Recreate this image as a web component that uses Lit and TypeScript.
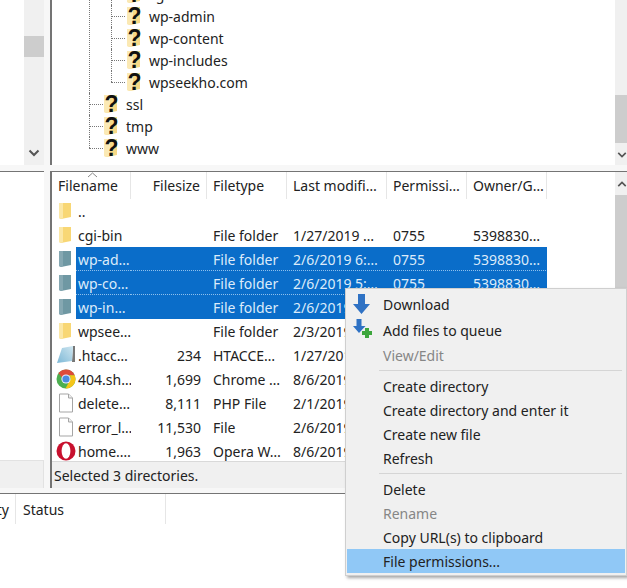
import { LitElement, html, css, svg } from "lit";
import { customElement } from "lit/decorators.js";

type Row = { icon: string; name: string; size?: string; type: string; date?: string; perm?: string; owner?: string; sel?: boolean; dot?: boolean };

const rows: Row[] = [
  { icon: "folder", name: "..", type: "" },
  { icon: "folder", name: "cgi-bin", type: "File folder", date: "1/27/2019 …", perm: "0755", owner: "5398830…" },
  { icon: "selfolder", name: "wp-ad…", type: "File folder", date: "2/6/2019 6:…", perm: "0755", owner: "5398830…", sel: true, dot: true },
  { icon: "selfolder", name: "wp-co…", type: "File folder", date: "2/6/2019 5:…", perm: "0755", owner: "5398830…", sel: true, dot: true },
  { icon: "selfolder", name: "wp-in…", type: "File folder", date: "2/6/2019 5:…", perm: "0755", owner: "5398830…", sel: true },
  { icon: "folder", name: "wpsee…", type: "File folder", date: "2/3/2019 …", perm: "0755", owner: "5398830…" },
  { icon: "ht", name: ".htacc…", size: "234", type: "HTACCE…", date: "1/27/2019 …", perm: "0644", owner: "5398830…" },
  { icon: "chrome", name: "404.sh…", size: "1,699", type: "Chrome …", date: "8/6/2019 …", perm: "0644", owner: "5398830…" },
  { icon: "doc", name: "delete…", size: "8,111", type: "PHP File", date: "2/1/2019 …", perm: "0644", owner: "5398830…" },
  { icon: "doc", name: "error_l…", size: "11,530", type: "File", date: "2/6/2019 …", perm: "0644", owner: "5398830…" },
  { icon: "opera", name: "home.…", size: "1,963", type: "Opera W…", date: "8/6/2019 …", perm: "0644", owner: "5398830…" },
];

const chevron = (up: boolean) => html`<svg class="chev" width="12" height="8" viewBox="0 0 12 8"><polyline points=${up ? "1.5,6.5 6,2 10.5,6.5" : "1.5,1.5 6,6 10.5,1.5"} fill="none" stroke="#555" stroke-width="2"/></svg>`;

const fileIcon = (k: string) => {
  if (k === "folder" || k === "selfolder") {
    const c = k === "folder" ? "#f8d775" : "#6f98a3";
    const d = k === "folder" ? "#fbe7a6" : "#86a8b2";
    return html`<svg width="18" height="18" viewBox="0 0 18 18"><path d="M2 1h12v14l-10 2-2-1z" fill=${c}/><path d="M2 1h4v15l-2 1-2-1z" fill=${d}/></svg>`;
  }
  if (k === "doc")
    return html`<svg width="18" height="20" viewBox="0 0 18 20"><path d="M2.500 1h9l4 4v14h-13z" fill="#fff" stroke="#a5a5a5"/><path d="M11.500 1v4h4" fill="#eee" stroke="#a5a5a5"/></svg>`;
  if (k === "ht")
    return html`<svg width="20" height="20" viewBox="0 0 20 20"><defs><linearGradient id="htg" x1="0" y1="1" x2="1" y2="0"><stop offset="0" stop-color="#7db8d6"/><stop offset="1" stop-color="#cfe6f0"/></linearGradient></defs><path d="M17 1h2v16h-3z" fill="#777"/><path d="M6 3l11-2-1 15-15 2z" fill="url(#htg)"/></svg>`;
  if (k === "chrome")
    return html`<svg width="20" height="20" viewBox="0 0 20 20">
      <circle cx="10" cy="10" r="9.500" fill="#4caf50"/>
      <path d="M10 .5A9.500 9.500 0 0 1 18.700 6.200H10A3.800 3.800 0 0 0 6.400 8.900L2.400 4.300A9.500 9.500 0 0 1 10 .5z" fill="#dd4b39"/>
      <path d="M18.700 6.200A9.500 9.500 0 0 1 9.500 19.500L13.500 12A3.800 3.800 0 0 0 13 6.200z" fill="#f5c518"/>
      <circle cx="10" cy="10" r="4.600" fill="#eef"/><circle cx="10" cy="10" r="3.600" fill="#4a8be0"/></svg>`;
  return html`<svg width="20" height="20" viewBox="0 0 20 20"><ellipse cx="10" cy="10" rx="9.500" ry="9.500" fill="#c8102e"/><ellipse cx="10" cy="10" rx="4.400" ry="7.800" fill="#fff"/></svg>`;
};

const qIcon = svg`<path d="M0 1h13v16l-10 2-3-1z" fill="#f6d987"/><path d="M0 1h6v17l-3 1-3-1z" fill="#fbe9b4"/><text x="0.500" y="18" font-family="Liberation Sans, sans-serif" font-weight="700" font-size="23" fill="#111">?</text>`;

const node = (label: string, kids?: unknown) => html`<div class="node"><div class="label"><svg class="q" width="16" height="20" viewBox="0 0 16 20">${qIcon}</svg><span>${label}</span></div>${kids ? html`<div class="kids">${kids}</div>` : ""}</div>`;

@customElement("app-root")
export class AppRoot extends LitElement {
  static styles = css`
    :host { display: block; width: 627px; height: 588px; overflow: hidden; font-family: "Noto Sans", "Open Sans", sans-serif; font-size: 14px; color: #222; }
    .app { position: relative; width: 627px; height: 588px; background: #f7f7f7; display: flex; flex-direction: column; overflow: hidden; }
    .top { height: 165px; display: flex; flex: none; }
    .leftwhite { width: 24px; background: #fff; flex: none; }
    .sb { width: 20px; background: #f0f0f0; display: flex; flex-direction: column; flex: none; }
    .sb .track { flex: 1; padding-top: 36px; }
    .sb .thumb { height: 21px; background: #cdcdcd; }
    .sb .btn { height: 24px; display: flex; align-items: center; justify-content: center; flex: none; }
    .sash { width: 6px; flex: none; }
    .vline { width: 2px; background: #747474; flex: none; }
    .tree { flex: 1; background: #fff; overflow: hidden; padding: 0 0 0 37px; }
    .tree-in { margin-top: -39px; }
    .node { position: relative; padding-left: 15px; }
    .node::before { content: ""; position: absolute; left: 0; top: 11px; width: 14px; border-top: 1px dotted #777; }
    .node::after { content: ""; position: absolute; left: 0; top: 0; bottom: 0; border-left: 1px dotted #777; }
    .node:last-child::after { bottom: auto; height: 11px; }
    .label { height: 22px; display: flex; align-items: center; gap: 6px; white-space: nowrap; }
    .q { flex: none; }
    .kids { margin-left: 7px; }
    .kids .node { padding-left: 16px; }
    .vsb { width: 12px; background: #f0f0f0; display: flex; flex-direction: column; flex: none; overflow: hidden; }
    .vsb .btn { height: 23px; flex: none; display: flex; align-items: center; padding-left: 2px; }
    .vsb .track { flex: 1; }
    .vsb .thumb { background: #cdcdcd; }
    .t1 { padding-top: 95px; }
    .t1 .thumb { height: 48px; }
    .t2 .thumb { height: 240px; }
    .hgap { height: 6px; flex: none; }
    .mid { height: 317px; display: flex; flex: none; }
    .leftpane { width: 44px; flex: none; display: flex; flex-direction: column; border-top: 1px solid #747474; }
    .leftpane .w { flex: 1; background: #fff; }
    .leftpane .s { height: 27px; background: #f0f0f0; border-top: 1px solid #e2e2e2; border-right: 1px solid #e2e2e2; }
    .rightpane { flex: 1; display: flex; flex-direction: column; border-top: 1px solid #747474; min-width: 0; }
    .listwrap { flex: 1; display: flex; min-height: 0; }
    .list { flex: 1; background: #fff; overflow: hidden; }
    .grid { display: grid; grid-template-columns: 79px 76px 80px 100px 80px 80px; width: 495px; }
    .head { height: 27px; position: relative; }
    .hc { display: flex; align-items: center; padding: 0 6px; border-right: 1px solid #e6e6e6; white-space: nowrap; overflow: hidden; height: 27px; box-sizing: border-box; }
    .hc.r { justify-content: flex-end; }
    .caret { position: absolute; left: 35px; top: 0; }
    .row { height: 24px; }
    .c { display: flex; align-items: center; padding: 0 6px; white-space: nowrap; overflow: hidden; height: 24px; box-sizing: border-box; }
    .c.r { justify-content: flex-end; }
    .c.name { padding: 0; }
    .ic { width: 24px; height: 24px; flex: none; display: flex; align-items: center; justify-content: center; box-sizing: border-box; padding-left: 4px; }
    .nm { flex: 1; height: 24px; display: flex; align-items: center; padding-left: 2px; overflow: hidden; }
    .sel .c:not(.name), .sel .nm { background-color: #0a6dc9; color: #dcebfa; }
    .dot .c:not(.name), .dot .nm { background-image: repeating-linear-gradient(90deg, #8fc0ec 0 1px, transparent 1px 2px); background-size: 100% 1px; background-position: bottom; background-repeat: no-repeat; }
    .status { height: 27px; flex: none; background: #f0f0f0; border-top: 1px solid #d9d9d9; display: flex; align-items: center; padding: 1px 0 0 2px; box-sizing: border-box; }
    .hgap2 { height: 5px; flex: none; }
    .queue { flex: 1; background: #fff; border-top: 1px solid #747474; display: flex; height: 30px; align-items: flex-start; }
    .q1 { width: 16px; height: 30px; display: flex; justify-content: flex-end; align-items: center; overflow: hidden; border-right: 1px solid #e6e6e6; box-sizing: border-box; white-space: nowrap; flex: none; padding-right: 6px; }
    .q2 { width: 150px; height: 30px; display: flex; align-items: center; padding-left: 7px; border-right: 1px solid #e6e6e6; box-sizing: border-box; flex: none; }
    .menu { position: absolute; left: 345px; top: 288px; width: 282px; height: 288px; box-sizing: border-box; background: #f0f0f0; border: 1px solid #cfcfcf; box-shadow: 2px 2px 3px rgba(0,0,0,.35); padding: 2px 1px 2px; display: flex; flex-direction: column; }
    .mi { height: 24px; flex: none; display: flex; align-items: center; padding-left: 36px; position: relative; white-space: nowrap; }
    .mi.tall { height: 26px; }
    .mi.dis { color: #868686; }
    .mi.hot { background: #90c8f6; }
    .mi svg { position: absolute; left: 5px; top: 1px; }
    .sep { height: 7px; flex: none; display: flex; align-items: center; padding-left: 32px; padding-right: 3px; }
    .sep i { flex: 1; height: 1px; background: #d5d5d5; display: block; }
  `;

  render() {
    return html`<div class="app">
      <div class="top">
        <div class="leftwhite"></div>
        <div class="sb"><div class="track"><div class="thumb"></div></div><div class="btn">${chevron(false)}</div></div>
        <div class="sash"></div><div class="vline"></div>
        <div class="tree"><div class="tree-in">
          ${node("public_html", html`${node("cgi-bin")}${node("wp-admin")}${node("wp-content")}${node("wp-includes")}${node("wpseekho.com")}`)}
          ${node("ssl")}${node("tmp")}${node("www")}
        </div></div>
        <div class="vsb"><div class="track t1"><div class="thumb"></div></div><div class="btn">${chevron(false)}</div></div>
      </div>
      <div class="hgap"></div>
      <div class="mid">
        <div class="leftpane"><div class="w"></div><div class="s"></div></div>
        <div class="sash"></div><div class="vline"></div>
        <div class="rightpane">
          <div class="listwrap">
            <div class="list">
              <div class="grid head">
                <div class="hc">Filename</div><div class="hc r">Filesize</div><div class="hc">Filetype</div><div class="hc">Last modifi…</div><div class="hc">Permissi…</div><div class="hc">Owner/G…</div>
                <svg class="caret" width="11" height="6" viewBox="0 0 11 6"><polyline points="1,5 5.500,1 10,5" fill="none" stroke="#888"/></svg>
              </div>
              ${rows.map((r) => html`<div class="grid row ${r.sel ? "sel" : ""} ${r.dot ? "dot" : ""}">
                <div class="c name"><div class="ic">${fileIcon(r.icon)}</div><div class="nm">${r.name}</div></div>
                <div class="c r">${r.size ?? ""}</div><div class="c">${r.type}</div><div class="c">${r.date ?? ""}</div><div class="c">${r.perm ?? ""}</div><div class="c">${r.owner ?? ""}</div>
              </div>`)}
            </div>
            <div class="vsb"><div class="btn">${chevron(true)}</div><div class="track t2"><div class="thumb"></div></div></div>
          </div>
          <div class="status">Selected 3 directories.</div>
        </div>
      </div>
      <div class="hgap2"></div>
      <div class="queue"><div class="q1">Priority</div><div class="q2">Status</div></div>

      <div class="menu">
        <div class="mi tall"><svg width="20" height="24" viewBox="0 0 20 24"><path d="M6 2h7v10h5l-8.500 10L1 12h5z" fill="#2f72c4"/></svg>Download</div>
        <div class="mi tall"><svg width="24" height="24" viewBox="0 0 24 24"><path d="M4.500 1h5v7h4l-6.500 7-6-7h3.500z" fill="#2f72c4"/><path d="M13 10h4v3h3v4h-3v3h-4v-3h-3v-4h3z" fill="#3da63d"/></svg>Add files to queue</div>
        <div class="mi dis">View/Edit</div>
        <div class="sep"><i></i></div>
        <div class="mi">Create directory</div>
        <div class="mi">Create directory and enter it</div>
        <div class="mi">Create new file</div>
        <div class="mi">Refresh</div>
        <div class="sep"><i></i></div>
        <div class="mi">Delete</div>
        <div class="mi dis">Rename</div>
        <div class="mi">Copy URL(s) to clipboard</div>
        <div class="mi hot">File permissions...</div>
      </div>
    </div>`;
  }
}
